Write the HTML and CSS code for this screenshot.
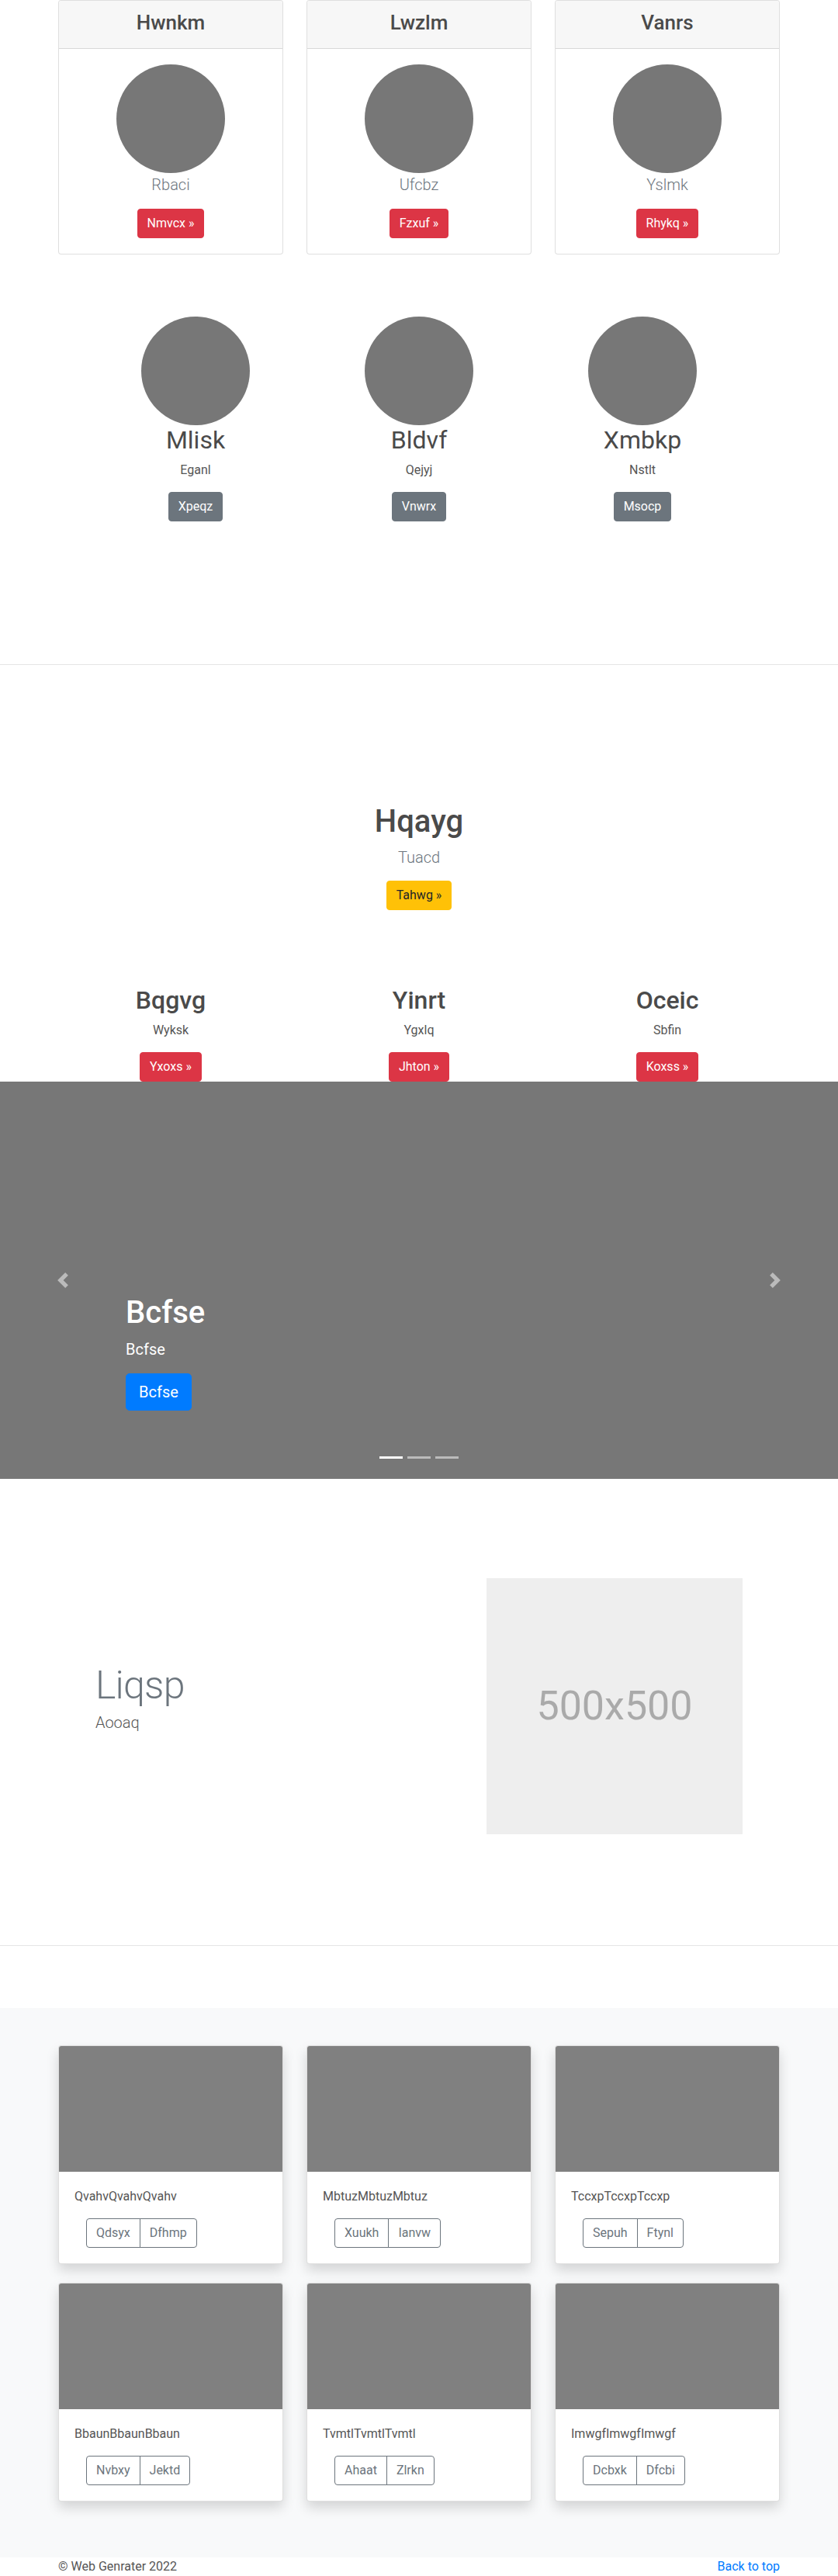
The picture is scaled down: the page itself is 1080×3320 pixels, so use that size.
FILE: index.html
```html
<!DOCTYPE html>
<html lang="en">
<head>
<meta charset="utf-8">
<title>Web Genrater</title>
<link rel="stylesheet" href="styles.css">
</head>
<body>
<main>
  <div class="container">
    <div class="grid3">
      <div class="pcard">
        <div class="pcard-head"><h3>Hwnkm</h3></div>
        <div class="pcard-body">
          <div class="circle"></div>
          <p class="lead muted">Rbaci</p>
          <div class="btn-row"><a class="btn btn-danger" href="#">Nmvcx &raquo;</a></div>
        </div>
      </div>
      <div class="pcard">
        <div class="pcard-head"><h3>Lwzlm</h3></div>
        <div class="pcard-body">
          <div class="circle"></div>
          <p class="lead muted">Ufcbz</p>
          <div class="btn-row"><a class="btn btn-danger" href="#">Fzxuf &raquo;</a></div>
        </div>
      </div>
      <div class="pcard">
        <div class="pcard-head"><h3>Vanrs</h3></div>
        <div class="pcard-body">
          <div class="circle"></div>
          <p class="lead muted">Yslmk</p>
          <div class="btn-row"><a class="btn btn-danger" href="#">Rhykq &raquo;</a></div>
        </div>
      </div>
    </div>
  </div>

  <div class="marketing">
    <div class="mgrid">
      <div class="mcol">
        <div class="circle"></div>
        <h2 class="mtitle">Mlisk</h2>
        <p class="mtext">Eganl</p>
        <div class="btn-row"><a class="btn btn-secondary" href="#">Xpeqz</a></div>
      </div>
      <div class="mcol">
        <div class="circle"></div>
        <h2 class="mtitle">Bldvf</h2>
        <p class="mtext">Qejyj</p>
        <div class="btn-row"><a class="btn btn-secondary" href="#">Vnwrx</a></div>
      </div>
      <div class="mcol">
        <div class="circle"></div>
        <h2 class="mtitle">Xmbkp</h2>
        <p class="mtext">Nstlt</p>
        <div class="btn-row"><a class="btn btn-secondary" href="#">Msocp</a></div>
      </div>
    </div>
  </div>

  <hr class="divider divider-1">

  <section class="hero">
    <h1 class="hero-title">Hqayg</h1>
    <p class="lead muted hero-lead">Tuacd</p>
    <div class="btn-row"><a class="btn btn-warning" href="#">Tahwg &raquo;</a></div>
  </section>

  <div class="container feats">
    <div class="grid3">
      <div class="fcol">
        <h2 class="ftitle">Bqgvg</h2>
        <p class="ftext">Wyksk</p>
        <div class="btn-row"><a class="btn btn-danger" href="#">Yxoxs &raquo;</a></div>
      </div>
      <div class="fcol">
        <h2 class="ftitle">Yinrt</h2>
        <p class="ftext">Ygxlq</p>
        <div class="btn-row"><a class="btn btn-danger" href="#">Jhton &raquo;</a></div>
      </div>
      <div class="fcol">
        <h2 class="ftitle">Oceic</h2>
        <p class="ftext">Sbfin</p>
        <div class="btn-row"><a class="btn btn-danger" href="#">Koxss &raquo;</a></div>
      </div>
    </div>
  </div>

  <div class="carousel">
    <ol class="indicators">
      <li class="active"></li>
      <li></li>
      <li></li>
    </ol>
    <div class="caption">
      <h1 class="cap-title">Bcfse</h1>
      <p class="cap-text">Bcfse</p>
      <p class="cap-btn"><a class="btn btn-lg btn-primary" href="#">Bcfse</a></p>
    </div>
    <a class="control control-prev" href="#">
      <svg class="control-icon" viewBox="0 0 8 8" width="20" height="20"><path fill="#fff" d="M5.25 0l-4 4 4 4 1.5-1.5L4.25 4l2.5-2.5L5.25 0z"/></svg>
    </a>
    <a class="control control-next" href="#">
      <svg class="control-icon" viewBox="0 0 8 8" width="20" height="20"><path fill="#fff" d="M2.75 0l-1.5 1.5L3.75 4l-2.5 2.5L2.75 8l4-4-4-4z"/></svg>
    </a>
  </div>

  <div class="featurette">
    <div class="feat-text">
      <h2 class="feat-heading">Liqsp</h2>
      <p class="lead feat-lead">Aooaq</p>
    </div>
    <div class="feat-media">
      <div class="placeholder">500x500</div>
    </div>
  </div>

  <hr class="divider divider-2">

  <div class="album">
    <div class="container">
      <div class="grid3">
        <div class="acard">
          <div class="thumb"></div>
          <div class="acard-body">
            <p class="acard-text">QvahvQvahvQvahv</p>
            <div class="btn-group"><a class="btn btn-outline" href="#">Qdsyx</a><a class="btn btn-outline" href="#">Dfhmp</a></div>
          </div>
        </div>
        <div class="acard">
          <div class="thumb"></div>
          <div class="acard-body">
            <p class="acard-text">MbtuzMbtuzMbtuz</p>
            <div class="btn-group"><a class="btn btn-outline" href="#">Xuukh</a><a class="btn btn-outline" href="#">Ianvw</a></div>
          </div>
        </div>
        <div class="acard">
          <div class="thumb"></div>
          <div class="acard-body">
            <p class="acard-text">TccxpTccxpTccxp</p>
            <div class="btn-group"><a class="btn btn-outline" href="#">Sepuh</a><a class="btn btn-outline" href="#">Ftynl</a></div>
          </div>
        </div>
        <div class="acard">
          <div class="thumb"></div>
          <div class="acard-body">
            <p class="acard-text">BbaunBbaunBbaun</p>
            <div class="btn-group"><a class="btn btn-outline" href="#">Nvbxy</a><a class="btn btn-outline" href="#">Jektd</a></div>
          </div>
        </div>
        <div class="acard">
          <div class="thumb"></div>
          <div class="acard-body">
            <p class="acard-text">TvmtlTvmtlTvmtl</p>
            <div class="btn-group"><a class="btn btn-outline" href="#">Ahaat</a><a class="btn btn-outline" href="#">Zlrkn</a></div>
          </div>
        </div>
        <div class="acard">
          <div class="thumb"></div>
          <div class="acard-body">
            <p class="acard-text">ImwgfImwgfImwgf</p>
            <div class="btn-group"><a class="btn btn-outline" href="#">Dcbxk</a><a class="btn btn-outline" href="#">Dfcbi</a></div>
          </div>
        </div>
      </div>
    </div>
  </div>

  <footer class="container footer">
    <p class="copy">&copy; Web Genrater 2022</p>
    <p class="totop"><a href="#">Back to top</a></p>
  </footer>
</main>
</body>
</html>
```

FILE: styles.css
```css
* { box-sizing: border-box; }

html, body {
  margin: 0;
  padding: 0;
}

body {
  width: 1080px;
  font-family: Roboto, "Open Sans", "Liberation Sans", sans-serif;
  font-size: 16px;
  line-height: 1.5;
  color: #555;
  background: #fff;
}

h1, h2, h3, p { margin: 0; }

a { text-decoration: none; }

.container {
  width: 930px;
  margin: 0 auto;
}

.grid3 {
  display: grid;
  grid-template-columns: repeat(3, 1fr);
  column-gap: 30px;
}

.btn-row {
  display: flex;
  justify-content: center;
}

.btn {
  display: inline-block;
  padding: 6px 12px;
  font-size: 16px;
  line-height: 24px;
  border: 1px solid transparent;
  border-radius: 4px;
  color: #fff;
  text-align: center;
  white-space: nowrap;
}

.btn-danger { background: #dc3545; border-color: #dc3545; }
.btn-secondary { background: #6c757d; border-color: #6c757d; }
.btn-warning { background: #ffc107; border-color: #ffc107; color: #212529; }
.btn-primary { background: #007bff; border-color: #007bff; }

.btn-lg {
  padding: 8px 16px;
  font-size: 20px;
  line-height: 30px;
  border-radius: 5px;
}

.lead {
  font-size: 20px;
  font-weight: 300;
  line-height: 30px;
}

.muted { color: #6c757d; }

.circle {
  width: 140px;
  height: 140px;
  border-radius: 50%;
  background: #777;
  margin: 0 auto;
}

/* pricing cards */
.pcard {
  border: 1px solid rgba(0, 0, 0, .125);
  border-radius: 4px;
  background: #fff;
  text-align: center;
  overflow: hidden;
}

.pcard-head {
  background: #f7f7f7;
  border-bottom: 1px solid rgba(0, 0, 0, .125);
  padding: 0 20px 5px;
}

.pcard-head h3 {
  font-size: 26px;
  font-weight: 500;
  line-height: 56px;
  color: #4a4a4a;
}

.pcard-body {
  padding: 20px;
}

.pcard-body .lead {
  margin-bottom: 16px;
}

/* marketing circles */
.marketing {
  width: 864px;
  margin: 80px auto 0;
}

.mgrid {
  display: grid;
  grid-template-columns: repeat(3, 1fr);
}

.mcol { text-align: center; }

.mtitle {
  font-size: 32px;
  font-weight: 400;
  line-height: 38px;
  margin-bottom: 8px;
  color: #4a4a4a;
}

.mtext { margin-bottom: 16px; }

/* dividers */
.divider {
  border: 0;
  border-top: 1px solid rgba(0, 0, 0, .1);
  margin: 0;
  height: 0;
}

.divider-1 { margin-top: 184px; }
.divider-2 { margin-top: 143px; }

/* hero */
.hero {
  margin-top: 178px;
  text-align: center;
}

.hero-title {
  font-size: 40px;
  font-weight: 500;
  line-height: 48px;
  margin-bottom: 7px;
  color: #4a4a4a;
}

.hero-lead { margin-bottom: 15px; }

/* three features */
.feats { margin-top: 97px; }

.fcol { text-align: center; }

.ftitle {
  font-size: 32px;
  font-weight: 500;
  line-height: 38px;
  margin-bottom: 8px;
  color: #4a4a4a;
}

.ftext { margin-bottom: 16px; }

/* carousel */
.carousel {
  position: relative;
  height: 512px;
  background: #777;
  overflow: hidden;
}

.indicators {
  position: absolute;
  left: 0;
  right: 0;
  bottom: 0;
  margin: 0 0 16px;
  padding: 0;
  list-style: none;
  display: flex;
  justify-content: center;
}

.indicators li {
  width: 30px;
  height: 3px;
  margin: 10px 3px;
  background: #fff;
  opacity: .5;
}

.indicators li.active { opacity: 1; }

.caption {
  position: absolute;
  left: 162px;
  right: 162px;
  bottom: 52px;
  padding: 20px 0;
  color: #fff;
  text-align: left;
}

.cap-title {
  font-size: 40px;
  font-weight: 500;
  line-height: 48px;
  margin-bottom: 8px;
}

.cap-text {
  font-size: 20px;
  line-height: 30px;
  margin-bottom: 16px;
}

.cap-btn {
  display: flex;
  margin-bottom: 16px;
}

.control {
  position: absolute;
  top: 0;
  bottom: 0;
  width: 162px;
  display: flex;
  align-items: center;
  justify-content: center;
  opacity: .5;
}

.control-prev { left: 0; }
.control-next { right: 0; }

.control-icon { display: block; }

/* featurette */
.featurette {
  width: 864px;
  margin: 128px auto 0;
  display: flex;
  align-items: center;
}

.feat-text {
  width: 504px;
  padding: 0 15px;
}

.feat-heading {
  font-size: 50px;
  font-weight: 300;
  line-height: 50px;
  letter-spacing: -0.8px;
  color: #6c757d;
  margin-bottom: 8px;
}

.feat-lead {
  margin-bottom: 16px;
  color: #555;
}

.feat-media {
  width: 360px;
  padding: 0 15px;
}

.placeholder {
  width: 330px;
  height: 330px;
  background: #eee;
  color: #aaa;
  font-size: 52px;
  display: flex;
  align-items: center;
  justify-content: center;
}

/* album */
.album {
  margin-top: 80px;
  background: #f8f9fa;
  padding: 48px 0;
}

.acard {
  background: #fff;
  border: 1px solid rgba(0, 0, 0, .125);
  border-radius: 4px;
  overflow: hidden;
  margin-bottom: 24px;
  box-shadow: 0 8px 16px rgba(0, 0, 0, .15);
}

.thumb {
  height: 162px;
  background: #808080;
}

.acard-body {
  padding: 20px;
}

.acard-text {
  margin-bottom: 16px;
}

.btn-group {
  display: inline-flex;
  margin-left: 15px;
}

.btn-outline {
  color: #6c757d;
  border-color: #6c757d;
  background: transparent;
}

.btn-group .btn-outline:first-child {
  border-top-right-radius: 0;
  border-bottom-right-radius: 0;
}

.btn-group .btn-outline + .btn-outline {
  margin-left: -1px;
  border-top-left-radius: 0;
  border-bottom-left-radius: 0;
}

/* footer */
.footer {
  display: flex;
  justify-content: space-between;
  height: 24px;
}

.footer p { line-height: 24px; }

.totop a { color: #007bff; }
```
